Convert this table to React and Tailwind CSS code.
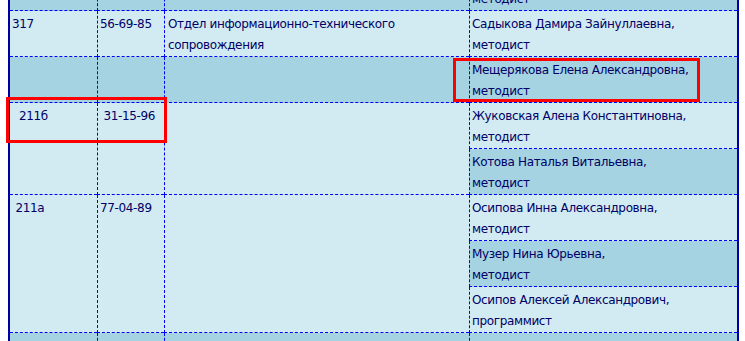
import React from "react";

const LIGHT = "bg-[#d2ebf2]";
const DARK = "bg-[#a5d3e1]";

// col4 entries: [name, post]; row stripes alternate from the first (dark) row
const staff = [
  ["Иванова Ольга Петровна,", "методист"],
  ["Садыкова Дамира Зайнуллаевна,", "методист"],
  ["Мещерякова Елена Александровна,", "методист"],
  ["Жуковская Алена Константиновна,", "методист"],
  ["Котова Наталья Витальевна,", "методист"],
  ["Осипова Инна Александровна,", "методист"],
  ["Музер Нина Юрьевна,", "методист"],
  ["Осипов Алексей Александрович,", "программист"],
  ["", ""],
];

// left cells: start row (1-based), span, room, phone, department
const rooms = [
  { row: 1, span: 1, room: "", phone: "", dept: [] },
  { row: 2, span: 1, room: "317", phone: "56-69-85", dept: ["Отдел информационно-технического", "сопровождения"] },
  { row: 3, span: 1, room: "", phone: "", dept: [] },
  { row: 4, span: 2, room: "\u00a0\u00a0211б", phone: "\u00a031-15-96", dept: [] },
  { row: 6, span: 3, room: "\u00a0211а", phone: "77-04-89", dept: [] },
  { row: 9, span: 1, room: "", phone: "", dept: [] },
];

const rowStart = {
  1: "row-start-1", 2: "row-start-2", 3: "row-start-3", 4: "row-start-4",
  5: "row-start-5", 6: "row-start-6", 7: "row-start-7", 8: "row-start-8", 9: "row-start-9",
};
const rowSpan = { 1: "row-span-1", 2: "row-span-2", 3: "row-span-3" };

const cell = "border-b border-dashed border-[#0000ff] px-[2px] pt-[3px] pb-0 leading-[21px] min-h-[46px]";

export default function App() {
  return (
    <div className="relative h-[341px] w-[745px] overflow-hidden bg-white text-[12px] tracking-[-0.35px] text-[#000066]" style={{ fontFamily: "'DejaVu Sans', Verdana, sans-serif" }}>
      <div className="ml-[8px] -mt-[35px] w-[731px] border-x-2 border-[#0000a0]">
        <div className="grid grid-cols-[87px_67px_305px_268px]">
          {rooms.map((r) => {
            const bg = r.row % 2 === 1 ? DARK : LIGHT;
            const pos = `${rowStart[r.row]} ${rowSpan[r.span]}`;
            return (
              <React.Fragment key={r.row}>
                <div className={`col-start-1 ${pos} ${bg} ${cell}`}>{r.room}</div>
                <div className={`col-start-2 ${pos} ${bg} ${cell} border-l`}>{r.phone}</div>
                <div className={`col-start-3 ${pos} ${bg} ${cell} border-l pl-[3px]`}>
                  {r.dept.map((line, i) => (
                    <div key={i}>{line}</div>
                  ))}
                </div>
              </React.Fragment>
            );
          })}
          {staff.map(([name, post], i) => (
            <div key={i} className={`col-start-4 ${rowStart[i + 1]} ${i % 2 === 0 ? DARK : LIGHT} ${cell} border-l`}>
              <div>{name || "\u00a0"}</div>
              <div>{post || "\u00a0"}</div>
            </div>
          ))}
        </div>
      </div>

      {/* red highlight frames */}
      <div className="absolute left-[6px] top-[97px] h-[46px] w-[161px] border-[3px] border-[#ff0000]" />
      <div className="absolute left-[453px] top-[58px] h-[44px] w-[247px] border-[3px] border-[#ff0000]" />
    </div>
  );
}
